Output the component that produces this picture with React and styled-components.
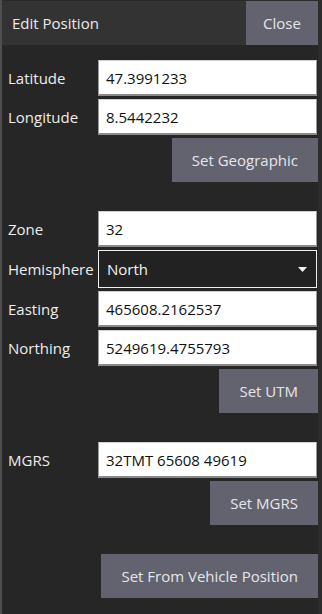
import React from "react";
import styled, { createGlobalStyle } from "styled-components";

const Global = createGlobalStyle`
  html, body { margin: 0; padding: 0; background: #4f4f4f; }
  body { font-family: "Open Sans", "Liberation Sans", sans-serif; }
  * { box-sizing: border-box; }
`;

const Panel = styled.div`
  margin-left: 2px;
  width: 320px;
  height: 614px;
  background: #262626;
  border-right: 4px solid #2c2c2c;
  display: flex;
  flex-direction: column;
`;

const Header = styled.div`
  height: 45px;
  background: #333333;
  border-top: 1px solid #2a2a2a;
  display: flex;
  align-items: stretch;
  justify-content: space-between;
`;

const Title = styled.div`
  color: #ececec;
  font-size: 15px;
  display: flex;
  align-items: center;
  padding-left: 10px;
`;

const Button = styled.button`
  font-family: "Open Sans", "Liberation Sans", sans-serif;
  font-size: 15px;
  color: #e6e6ea;
  background: #63626f;
  border: none;
  padding: 0 ${(p) => p.$pad ?? 20}px;
  height: ${(p) => p.$h ?? 44}px;
  cursor: pointer;
`;

const CloseButton = styled(Button)`
  width: 72px;
  height: auto;
  padding: 0;
`;

const Body = styled.div`
  padding: 15px 0 0 6px;
  display: flex;
  flex-direction: column;
  gap: 29px;
`;

const Section = styled.div`
  display: flex;
  flex-direction: column;
  gap: 3px;
`;

const Row = styled.div`
  display: grid;
  grid-template-columns: 90px 219px;
  align-items: center;
`;

const Label = styled.label`
  color: #ededed;
  font-size: 15px;
`;

const Input = styled.input`
  height: 36px;
  width: 100%;
  font-family: "Open Sans", "Liberation Sans", sans-serif;
  font-size: 15px;
  color: #111;
  background: #fff;
  border: 1px solid #9a9a9a;
  border-top-color: #d0d0d0;
  border-bottom: 2px solid #8a8a8a;
  padding: 0 7px;
  outline: none;
`;

const SelectBox = styled.div`
  height: 38px;
  border: 1px solid #f0f0f0;
  background: #222222;
  color: #f2f2f2;
  font-size: 15px;
  display: flex;
  align-items: center;
  justify-content: space-between;
  padding: 0 9px 0 8px;
`;

const ButtonRow = styled.div`
  display: flex;
  justify-content: flex-end;
`;

const Field = ({ label, value }) => (
  <Row>
    <Label>{label}</Label>
    <Input defaultValue={value} />
  </Row>
);

export default function App() {
  return (
    <>
      <Global />
      <Panel>
        <Header>
          <Title>Edit Position</Title>
          <CloseButton>Close</CloseButton>
        </Header>
        <Body>
          <Section>
            <Field label="Latitude" value="47.3991233" />
            <Field label="Longitude" value="8.5442232" />
            <ButtonRow>
              <Button>Set Geographic</Button>
            </ButtonRow>
          </Section>
          <Section>
            <Field label="Zone" value="32" />
            <Row>
              <Label>Hemisphere</Label>
              <SelectBox>
                <span>North</span>
                <svg width="9" height="5" viewBox="0 0 9 5">
                  <path d="M0 0 H9 L4.5 5 Z" fill="#f2f2f2" />
                </svg>
              </SelectBox>
            </Row>
            <Field label="Easting" value="465608.2162537" />
            <Field label="Northing" value="5249619.4755793" />
            <ButtonRow>
              <Button>Set UTM</Button>
            </ButtonRow>
          </Section>
          <Section>
            <Field label="MGRS" value="32TMT 65608 49619" />
            <ButtonRow>
              <Button>Set MGRS</Button>
            </ButtonRow>
          </Section>
          <Section>
            <ButtonRow>
              <Button>Set From Vehicle Position</Button>
            </ButtonRow>
          </Section>
        </Body>
      </Panel>
    </>
  );
}
